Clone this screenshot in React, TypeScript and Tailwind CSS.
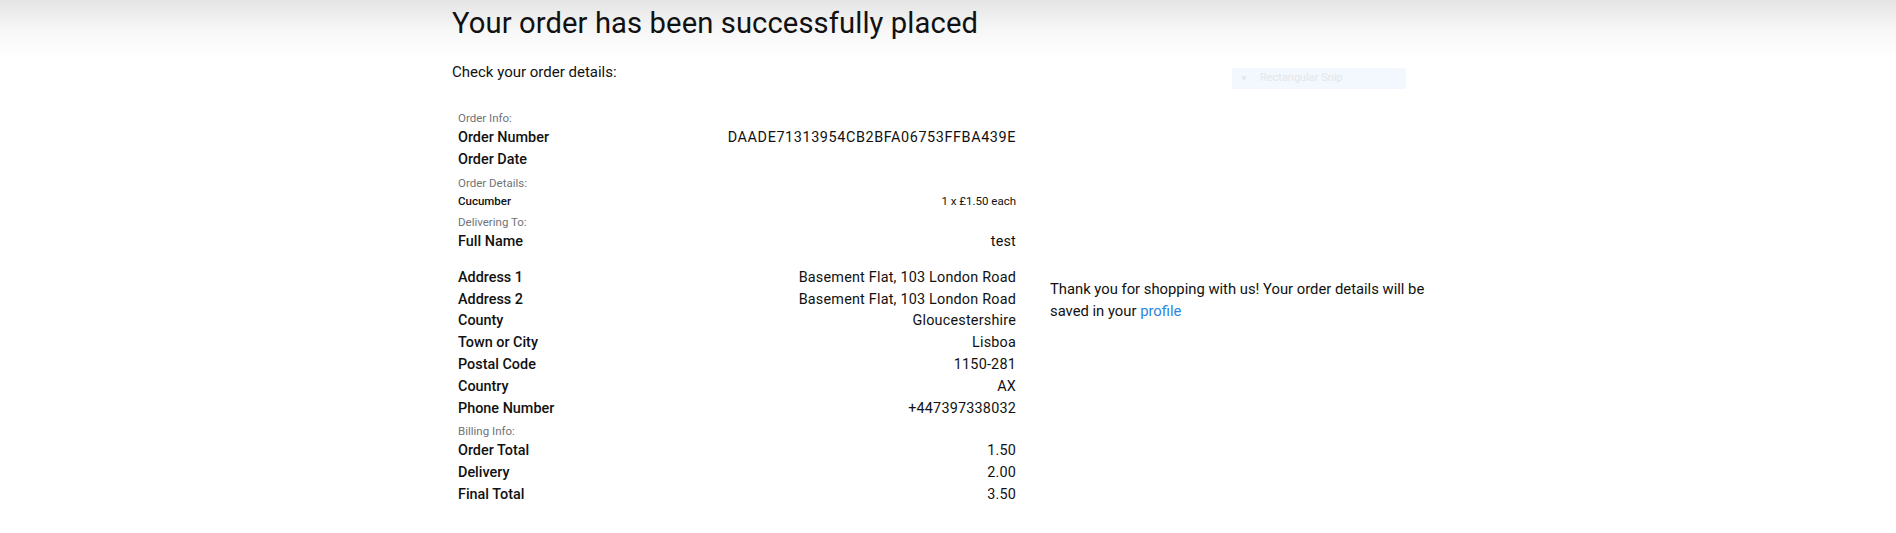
import React from "react";

type Row =
  | { kind: "label"; text: string }
  | { kind: "main"; label: string; value: string; gap?: boolean; wide?: boolean }
  | { kind: "item"; label: string; value: string };

const rows: Row[] = [
  { kind: "label", text: "Order Info:" },
  { kind: "main", label: "Order Number", value: "DAADE71313954CB2BFA06753FFBA439E", wide: true },
  { kind: "main", label: "Order Date", value: "" },
  { kind: "label", text: "Order Details:" },
  { kind: "item", label: "Cucumber", value: "1 x £1.50 each" },
  { kind: "label", text: "Delivering To:" },
  { kind: "main", label: "Full Name", value: "test" },
  { kind: "main", label: "Address 1", value: "Basement Flat, 103 London Road", gap: true },
  { kind: "main", label: "Address 2", value: "Basement Flat, 103 London Road" },
  { kind: "main", label: "County", value: "Gloucestershire" },
  { kind: "main", label: "Town or City", value: "Lisboa" },
  { kind: "main", label: "Postal Code", value: "1150-281" },
  { kind: "main", label: "Country", value: "AX" },
  { kind: "main", label: "Phone Number", value: "+447397338032" },
  { kind: "label", text: "Billing Info:" },
  { kind: "main", label: "Order Total", value: "1.50" },
  { kind: "main", label: "Delivery", value: "2.00" },
  { kind: "main", label: "Final Total", value: "3.50" },
];

export default function App() {
  return (
    <div className="relative min-h-[533px] w-full bg-[linear-gradient(to_bottom,#e4e4e4_0px,#f7f7f7_30px,#ffffff_58px)] text-[#111] font-['Roboto','Liberation_Sans',sans-serif]">
      {/* faint ghost overlay */}
      <div className="absolute left-[1232px] top-[68px] flex h-[21px] w-[174px] items-center gap-[12px] bg-[#f3f8fe] pl-[8px] text-[11px] text-[#e3e6ea]">
        <span className="text-[8px]">▼</span>
        <span>Rectangular Snip</span>
      </div>

      <div className="mx-auto w-[992px]">
        <h1 className="pt-[6px] text-[29.2px] font-normal leading-[34px] tracking-[0.1px]">
          Your order has been successfully placed
        </h1>
        <p className="mt-[22px] text-[15px] leading-[21px]">Check your order details:</p>

        <div className="mt-[23px] flex items-center">
          <div className="w-[570px] px-[6px]">
            {rows.map((r, i) => {
              if (r.kind === "label") {
                return (
                  <div key={i} className="pt-[4px] pb-[1px] text-[11.5px] leading-[16px] text-[#6f7378]">
                    {r.text}
                  </div>
                );
              }
              if (r.kind === "item") {
                return (
                  <div key={i} className="flex h-[18px] items-center justify-between text-[11.5px] leading-[18px]">
                    <span className="font-medium">{r.label}</span>
                    <span>{r.value}</span>
                  </div>
                );
              }
              return (
                <div
                  key={i}
                  className={`flex h-[21.8px] items-center justify-between text-[14.4px] leading-[21.8px] ${
                    r.gap ? "mt-[14.5px]" : ""
                  }`}
                >
                  <span className="font-medium">{r.label}</span>
                  <span className={r.wide ? "tracking-[0.6px]" : "tracking-[0.2px]"}>{r.value}</span>
                </div>
              );
            })}
          </div>
          <p className="mb-[10px] ml-[28px] w-[394px] text-[14.8px] leading-[21.8px]">
            Thank you for shopping with us! Your order details will be saved in your{" "}
            <a className="text-[#2b86e2]" href="#">
              profile
            </a>
          </p>
        </div>
      </div>
    </div>
  );
}
